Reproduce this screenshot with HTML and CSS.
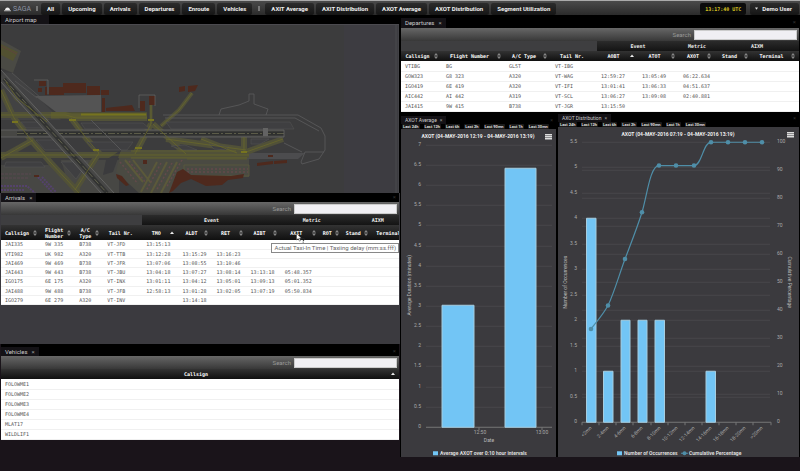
FILE: index.html
```html
<!DOCTYPE html>
<html lang="en">
<head>
<meta charset="utf-8">
<title>SAGA</title>
<link rel="stylesheet" href="styles.css">
</head>
<body>
<svg class="defs" aria-hidden="true">
  <symbol id="sort" viewBox="0 0 4 6"><path d="M0 2.400 2 0 4 2.400zM0 3.600 2 6 4 3.600z" fill="#888"/></symbol>
  <symbol id="up" viewBox="0 0 4 6"><path d="M0 4 2 1.600 4 4z" fill="#eee"/></symbol>
</svg>

<header class="topbar">
  <a class="logo" href="#"><svg viewBox="0 0 8 6" aria-hidden="true"><path d="M1 4.500Q1.500 1.200 4 1.200T7 4.500z" fill="#eee"/><path d="M0 5h8" stroke="#ccc"/></svg>SAGA</a>
  <span class="grip"></span>
  <nav class="nav">
    <button>All</button><button>Upcoming</button><button>Arrivals</button><button>Departures</button><button>Enroute</button><button>Vehicles</button>
    <span class="grip wide"></span>
    <button>AXIT Average</button><button>AXIT Distribution</button><button>AXOT Average</button><button>AXOT Distribution</button><button>Segment Utilization</button>
  </nav>
  <span class="clock">13:17:40 UTC</span>
  <button class="user"><svg viewBox="0 0 4 3" aria-hidden="true"><path d="M0 0h4L2 3z" fill="#ddd"/></svg>Demo User</button>
</header>

<main class="workspace">
  <div class="column left">
    <section class="panel">
      <div class="tabs fixed"><span class="tab map-tab">Airport map</span></div>
      <svg class="map" viewBox="0 24 400 169" preserveAspectRatio="xMinYMin slice" role="img" aria-label="Airport map">
        <rect y="24" width="400" height="169" fill="#3c3c3d"/>
        <path d="M343 24h57v169h-57z" fill="#3d3c41"/>
        <path d="M0 24.500H398V193M395 24V193" fill="none" stroke="#4b4a4f"/>
        <path d="M0 40 20 51 12 73 0 68z" fill="#4a4a44"/>
        <!-- paved ground -->
        <path d="M0 72 12 73 60 120H0z" fill="#424243"/>
        <path d="M34 96 100 95V112H55z" fill="#545454"/>
        <path d="M0 165H55L85 193H0zM60 160h58v33H70z" fill="#474744"/>
        <path d="M120 150H248V177H185L168 193H138L115 172z" fill="#4a4a42"/>
        <path d="M208 153h96l-7 6h-75z" fill="#4c4c4e"/>
        <!-- taxiway surfaces -->
        <g fill="none" stroke="#515138" stroke-width="6" stroke-linejoin="round">
          <path d="M0 115H65L75 118H146M0 155H248M0 90 13 118 30 140 50 163 78 193M0 158 32 140M70 118 85 138 98 153 74 190M5 82 16 98 46 122M150 124 134 154M152 124 185 154M165 139 245 150M282 139 245 152M243 137V153M200 139l36 14"/>
          <path d="M191 93 178 110 160 126" stroke-width="4"/>
          <path d="M150 104v20" stroke-width="3"/>
          <path d="M186 155h60" stroke-width="10"/>
        </g>
        <path d="M50 113.500H146v5H50z" fill="#5b5a31"/>
        <!-- grass between taxiways -->
        <g fill="#3f3f41" stroke="#575755" stroke-width=".5">
          <path d="M80 123h62l7 6H84zM86 142h46l-6 8H95zM20 122h27l6 6H25zM35 140h30l8 10H44zM5 162h35l4 5H3zM60 162h27l-12 17zM165 122h124l4 7H170zM170 146l14-1 12 5h-14zM208 144l20 3-3 3-12-1zM250 139h18l-9 5h-9z"/>
        </g>
        <path d="M105 160 120 150l-8 22-10 3z" fill="#3b3b3d"/>
        <!-- runways -->
        <path d="M0 133.500H283" stroke="#474744" stroke-width="7"/>
        <path d="M16 133.500H283" stroke="#2f302f" stroke-width="4"/>
        <path d="M16 133.500H283" stroke="#5c5c49" stroke-width="1" stroke-dasharray="7 2 2 2"/>
        <path d="M0 130H283V137H0" fill="none" stroke="#666" stroke-width=".8"/>
        <path d="M0 76 106 193" stroke="#474746" stroke-width="9"/>
        <path d="M3 79 106 193" stroke="#323332" stroke-width="4"/>
        <path d="M3 79 106 193" stroke="#62624e" stroke-width="1" stroke-dasharray="6 3"/>
        <g fill="none" stroke="#6b6b6b" stroke-width=".8">
          <path d="M0 70 113 193M0 82 100 193"/>
          <path d="M11 73 40 98M14 81 36 98" stroke="#555"/>
          <path d="M162 115H297L320 128 324 136V150L318 159 301 164 300 162 304 152H323M164 118H294L318 131M218 115l2-6 18-4 10-4v-7h5v10l14 5-2 6M283 143l18 9M90 120 120 150" stroke="#5c5c5d"/>
        </g>
        <path d="M262 128h5v8h-5z" fill="#636363"/>
        <!-- taxiway centrelines -->
        <g fill="none" stroke="#68672b" stroke-width=".8">
          <path d="M0 115H65L75 118H146M50 113H146M0 155H248M0 90 13 118 30 140 50 163 78 193M0 158 32 140M70 118 85 138 98 153 74 190M5 82 16 98 46 122M150 124 134 154M152 124 185 154M165 139 245 150M282 139 245 152M243 137V153M200 139l36 14M191 93 178 110 160 126M150 104v20M130 158h116M130 151h105"/>
        </g>
        <path d="M80 114.500H145M11 122h6M68 120h7M92 150h6M134 148h7M147 120h6M240 152h6" stroke="#77741f" stroke-width="2"/>
        <path d="M0 44 17 52 12 61 0 55z" fill="#525131"/><path d="M0 46 16 54" stroke="#5e453e"/>
        <!-- stands -->
        <g stroke="#5b593a" stroke-width="2"><path d="M124 160l18 22M132 160l18 23M156 162l-16 30M166 162l-16 31M176 162l-16 31"/></g>
        <g stroke="#634a4b" stroke-width="1.500" stroke-dasharray="2 2"><path d="M119 162l18 22M128 161l17 22M160 163l-15 28M171 163l-16 28M181 160l-16 28M186 169h61M186 172h61"/></g>
        <path d="M183 165h65v11h-65z" fill="none" stroke="#5a5a3d" stroke-width=".8"/>
        <path d="M0 186h26l8 7M0 190h24M37 177l15 16M41 177l14 15" fill="none" stroke="#54426c" stroke-width="2" stroke-dasharray="2 1"/>
        <path d="M0 174h30M0 178h28" stroke="#5a4850" stroke-dasharray="3 1"/>
        <!-- buildings -->
        <g fill="#4e291d">
          <path d="M38 81h7v5h-7zM37 88h4v4h-4zM44 87h2v8h-2zM48 87h15v8H48zM62 83h23v10H62zM86 86h13v9H86zM100 90h8v5h-8zM101 98h3v14h-3zM105 108l8-1 10-1 8-1 3 6h-29zM139 101h5v10h-5zM148 96h6v9h-6zM178 87l6-1v5l-6 1zM187 86l10-1-3 6-7 1zM142 160h4v4h-4zM33 175h5v2h-5zM115 174l6 2 7 9-3 1-9-8zM168 193l8-21 6-3 8 6 40 1 13-2-1 4-15 2-6 5-16 1-15-7-10 4-8 8zM267 155h5v2h-5zM256 163l16-2v3l-16 2zM273 161l13-1v3l-13 1z"/>
        </g>
        <path d="M33 80H47v14M138 108V95h16v11" fill="none" stroke="#6b6b6b" stroke-width=".6"/>
      </svg>
    </section>

    <section class="panel arrivals">
      <div class="tabs"><span class="tab">Arrivals <button class="close" aria-label="Close Arrivals">×</button></span></div>
      <div class="toolbar"><label for="s-arr">Search</label><input id="s-arr" type="search"></div>
      <div class="table-wrap">
      <table>
        <colgroup><col class="w40"><col class="w34"><col class="w28"><col class="w39"><col class="w36"><col class="w34"><col class="w34"><col class="w34"><col class="w39"><col class="w23"><col class="w29"><col class="w41"></colgroup>
        <thead>
          <tr class="groups"><td colspan="4"></td><th colspan="4">Event</th><th colspan="2">Metric</th><th colspan="2">AIXM</th></tr>
          <tr class="heads tall">
            <th><button><span>Callsign</span><svg><use href="#sort"/></svg></button></th>
            <th><button><span>Flight Number</span><svg><use href="#sort"/></svg></button></th>
            <th><button><span>A/C Type</span><svg><use href="#sort"/></svg></button></th>
            <th><button><span>Tail Nr.</span></button></th>
            <th><button><span>TMO</span><svg><use href="#up"/></svg></button></th>
            <th><button><span>ALDT</span><svg><use href="#sort"/></svg></button></th>
            <th><button><span>RET</span><svg><use href="#sort"/></svg></button></th>
            <th><button><span>AIBT</span><svg><use href="#sort"/></svg></button></th>
            <th><button><span>AXIT</span><svg><use href="#sort"/></svg></button></th>
            <th><button><span>ROT</span><svg><use href="#sort"/></svg></button></th>
            <th><button><span>Stand</span><svg><use href="#sort"/></svg></button></th>
            <th><button><span>Terminal</span><svg><use href="#sort"/></svg></button></th>
          </tr>
        </thead>
        <tbody>
          <tr><td>JAI335</td><td>9W 335</td><td>B738</td><td>VT-JFD</td><td>13:15:13</td><td></td><td></td><td></td><td></td><td></td><td></td><td></td></tr>
          <tr><td>VTI982</td><td>UK 982</td><td>A320</td><td>VT-TTB</td><td>13:12:28</td><td>13:15:29</td><td>13:16:23</td><td></td><td></td><td></td><td></td><td></td></tr>
          <tr><td>JAI469</td><td>9W 469</td><td>B738</td><td>VT-JFR</td><td>13:07:06</td><td>13:08:55</td><td>13:10:46</td><td></td><td></td><td></td><td></td><td></td></tr>
          <tr><td>JAI443</td><td>9W 443</td><td>B738</td><td>VT-JBU</td><td>13:04:18</td><td>13:07:27</td><td>13:08:14</td><td>13:13:18</td><td>05:48.357</td><td></td><td></td><td></td></tr>
          <tr><td>IGO175</td><td>6E 175</td><td>A320</td><td>VT-INX</td><td>13:01:11</td><td>13:04:12</td><td>13:05:01</td><td>13:09:13</td><td>05:01.352</td><td></td><td></td><td></td></tr>
          <tr><td>JAI488</td><td>9W 488</td><td>B738</td><td>VT-JFB</td><td>12:58:13</td><td>13:01:28</td><td>13:02:05</td><td>13:07:19</td><td>05:50.834</td><td></td><td></td><td></td></tr>
          <tr><td>IGO279</td><td>6E 279</td><td>A320</td><td>VT-INV</td><td></td><td>13:14:18</td><td></td><td></td><td></td><td></td><td></td><td></td></tr>
        </tbody>
      </table>
      </div>
      <div class="tooltip" role="tooltip">Actual Taxi-In Time | Taxiing delay (mm:ss.fff)</div>
      <svg class="cursor" viewBox="0 0 10 10" aria-hidden="true"><path d="M.500.500V7L2.200 5.500 3.500 8.200 4.600 7.600 3.500 5.200H5.500z" fill="#fff" stroke="#222" stroke-width=".4"/><path d="M6 6.500Q6 5.300 7.200 5.300T8.400 6.500Q8.400 7.200 7.200 7.600V8.200M7.200 8.800v.8" fill="none" stroke="#222" stroke-width="1"/></svg>
    </section>

    <section class="panel vehicles">
      <div class="tabs"><span class="tab">Vehicles <button class="close" aria-label="Close Vehicles">×</button></span></div>
      <div class="toolbar"><label for="s-veh">Search</label><input id="s-veh" type="search"></div>
      <table>
        <thead><tr class="heads"><th><button><span>Callsign</span><svg><use href="#up"/></svg></button></th></tr></thead>
        <tbody>
          <tr><td>FOLOWME1</td></tr><tr><td>FOLOWME2</td></tr><tr><td>FOLOWME3</td></tr><tr><td>FOLOWME4</td></tr><tr><td>MLAT17</td></tr><tr><td>WILDLIF1</td></tr>
        </tbody>
      </table>
    </section>
  </div>

  <div class="column right">
    <section class="panel departures">
      <div class="tabs"><span class="tab">Departures <button class="close" aria-label="Close Departures">×</button></span></div>
      <div class="toolbar"><label for="s-dep">Search</label><input id="s-dep" type="search"></div>
      <table>
        <colgroup><col class="w41"><col class="w63"><col class="w46"><col class="w46"><col class="w41"><col class="w41"><col class="w36"><col class="w37"><col class="w47"></colgroup>
        <thead>
          <tr class="groups"><td colspan="4"></td><th colspan="2">Event</th><th>Metric</th><th colspan="2">AIXM</th></tr>
          <tr class="heads">
            <th><button><span>Callsign</span><svg><use href="#sort"/></svg></button></th>
            <th><button><span>Flight Number</span><svg><use href="#sort"/></svg></button></th>
            <th><button><span>A/C Type</span><svg><use href="#sort"/></svg></button></th>
            <th><button><span>Tail Nr.</span></button></th>
            <th><button><span>AOBT</span><svg><use href="#up"/></svg></button></th>
            <th><button><span>ATOT</span><svg><use href="#sort"/></svg></button></th>
            <th><button><span>AXOT</span><svg><use href="#sort"/></svg></button></th>
            <th><button><span>Stand</span><svg><use href="#sort"/></svg></button></th>
            <th><button><span>Terminal</span><svg><use href="#sort"/></svg></button></th>
          </tr>
        </thead>
        <tbody>
          <tr><td>VTIBG</td><td>BG</td><td>GL5T</td><td>VT-IBG</td><td></td><td></td><td></td><td></td><td></td></tr>
          <tr><td>GOW323</td><td>G8 323</td><td>A320</td><td>VT-WAG</td><td>12:59:27</td><td>13:05:49</td><td>06:22.634</td><td></td><td></td></tr>
          <tr><td>IGO419</td><td>6E 419</td><td>A320</td><td>VT-IFI</td><td>13:01:41</td><td>13:06:33</td><td>04:51.637</td><td></td><td></td></tr>
          <tr><td>AIC442</td><td>AI 442</td><td>A319</td><td>VT-SCL</td><td>13:06:27</td><td>13:09:08</td><td>02:40.881</td><td></td><td></td></tr>
          <tr><td>JAI415</td><td>9W 415</td><td>B738</td><td>VT-JGR</td><td>13:15:50</td><td></td><td></td><td></td><td></td></tr>
        </tbody>
      </table>
    </section>

    <div class="charts">
      <section class="panel chart average">
        <div class="tabs"><span class="tab">AXOT Average <button class="close" aria-label="Close AXOT Average">×</button></span></div>
        <div class="ranges"><button>Last 24h</button><button>Last 12h</button><button>Last 6h</button><button>Last 2h</button><button>Last 90mn</button><button>Last 1h</button><button>Last 30mn</button></div>
        <svg class="plot" viewBox="401 129 155 328" role="img" aria-label="AXOT average">
          <text class="title" x="478" y="138">AXOT (04-MAY-2016 12:19 - 04-MAY-2016 13:19)</text>
          <path d="M545 134.500h7M545 136.500h7M545 138.500h7" stroke="#ddd" stroke-width="1.500"/>
          <path class="grid" d="M426 145H552M426 165H552M426 185H552M426 205H552M426 225H552M426 246H552M426 266H552M426 286H552M426 306H552M426 326H552M426 346H552M426 366H552M426 387H552M426 407H552"/>
          <path class="axis" d="M426 427H552M479 427v3M542 427v3"/>
          <g class="bars"><path d="M442 305h32v122h-32zM505 168h31v259h-31z"/></g>
          <g class="ticks end">
            <text x="421" y="146">7</text><text x="421" y="166">6.5</text><text x="421" y="186">6</text><text x="421" y="206">5.5</text><text x="421" y="226">5</text><text x="421" y="247">4.5</text><text x="421" y="267">4</text><text x="421" y="287">3.5</text><text x="421" y="307">3</text><text x="421" y="327">2.5</text><text x="421" y="347">2</text><text x="421" y="367">1.5</text><text x="421" y="388">1</text><text x="421" y="408">0.5</text><text x="421" y="428">0</text>
          </g>
          <g class="ticks mid"><text x="480" y="434">12:50</text><text x="542" y="434">13:00</text></g>
          <text class="name" x="489" y="442">Date</text>
          <text class="name" transform="translate(411 285) rotate(-90)">Average Duration (minutes)</text>
          <path d="M433 451h5v4h-5z" fill="#72c5f5"/>
          <text class="legend" x="440" y="455">Average AXOT over 0:10 hour intervals</text>
        </svg>
      </section>

      <section class="panel chart distribution">
        <div class="tabs"><span class="tab">AXOT Distribution <button class="close" aria-label="Close AXOT Distribution">×</button></span></div>
        <div class="ranges"><button>Last 24h</button><button>Last 12h</button><button>Last 6h</button><button>Last 2h</button><button>Last 90mn</button><button>Last 1h</button><button>Last 30mn</button></div>
        <svg class="plot" viewBox="558 127 241 330" role="img" aria-label="AXOT distribution">
          <text class="title" x="678" y="136">AXOT (04-MAY-2016 07:19 - 04-MAY-2016 13:19)</text>
          <path d="M787 132.500h7M787 134.500h7M787 136.500h7" stroke="#ddd" stroke-width="1.500"/>
          <path class="grid" d="M582 142H770M582 167H770M582 193H770M582 218H770M582 244H770M582 269H770M582 295H770M582 320H770M582 346H770M582 371H770M582 397H770M582 170H770M582 198H770M582 226H770M582 254H770M582 282H770M582 310H770M582 338H770M582 366H770M582 394H770"/>
          <path class="axis" d="M582 422H771M582 422v3M599 422v3M616 422v3M633 422v3M651 422v3M668 422v3M685 422v3M702 422v3M719 422v3M736 422v3M753 422v3M771 422v3"/>
          <g class="bars"><path d="M586.500 218h9.500v204h-9.500zM603.500 371h9.500v51h-9.500zM621 320h9v102h-9zM638 320h9v102h-9zM655 320h9.500v102h-9.500zM706 371h9.500v51h-9.500z"/></g>
          <path d="M591 328.700C596 322 602 316 608 305.300C614 293 619 275 625 258.800C631 243 637 228 642 212C647 196 650 165.300 659 165.300H694C702 165.300 703 142 711 142H762" fill="none" stroke="#4f8ea8" stroke-width="1.200"/>
          <g fill="#4f8ea8"><circle cx="591" cy="328.700" r="2.300"/><circle cx="608" cy="305.300" r="2.300"/><circle cx="625" cy="258.800" r="2.300"/><circle cx="642" cy="212" r="2.300"/><circle cx="659" cy="165.300" r="2.300"/><circle cx="676" cy="165.300" r="2.300"/><circle cx="694" cy="165.300" r="2.300"/><circle cx="711" cy="142" r="2.300"/><circle cx="728" cy="142" r="2.300"/><circle cx="745" cy="142" r="2.300"/><circle cx="762" cy="142" r="2.300"/></g>
          <g class="ticks end">
            <text x="577" y="143">5.5</text><text x="577" y="168">5</text><text x="577" y="194">4.5</text><text x="577" y="219">4</text><text x="577" y="245">3.5</text><text x="577" y="270">3</text><text x="577" y="296">2.5</text><text x="577" y="321">2</text><text x="577" y="347">1.5</text><text x="577" y="372">1</text><text x="577" y="398">0.5</text><text x="577" y="423">0</text>
          </g>
          <g class="ticks">
            <text x="777" y="143">100</text><text x="777" y="171">90</text><text x="777" y="199">80</text><text x="777" y="227">70</text><text x="777" y="255">60</text><text x="777" y="283">50</text><text x="777" y="311">40</text><text x="777" y="339">30</text><text x="777" y="367">20</text><text x="777" y="395">10</text><text x="777" y="423">0</text>
          </g>
          <g class="ticks end">
            <text transform="translate(592 428) rotate(-45)">&lt;2mn</text><text transform="translate(609 428) rotate(-45)">2-4mn</text><text transform="translate(626 428) rotate(-45)">4-6mn</text><text transform="translate(643 428) rotate(-45)">6-8mn</text><text transform="translate(661 428) rotate(-45)">8-10mn</text><text transform="translate(678 428) rotate(-45)">10-12mn</text><text transform="translate(695 428) rotate(-45)">12-14mn</text><text transform="translate(712 428) rotate(-45)">14-16mn</text><text transform="translate(729 428) rotate(-45)">16-18mn</text><text transform="translate(746 428) rotate(-45)">18-20mn</text><text transform="translate(763 428) rotate(-45)">&gt;20mn</text>
          </g>
          <text class="name" transform="translate(567 282) rotate(-90)">Number of Occurrences</text>
          <text class="name" transform="translate(788 282) rotate(90)">Cumulative Percentage</text>
          <path d="M617 451h5v4h-5z" fill="#72c5f5"/><text class="legend" x="624" y="455">Number of Occurrences</text>
          <path d="M681 453h7" stroke="#4f8ea8"/><circle cx="684.500" cy="453" r="2" fill="#4f8ea8"/><text class="legend" x="689" y="455">Cumulative Percentage</text>
        </svg>
      </section>
    </div>
  </div>
</main>
</body>
</html>
```
FILE: styles.css
```css
* { box-sizing: border-box; }
body {
  margin: 0;
  min-height: 100vh;
  display: flex;
  flex-direction: column;
  background: #000;
  color: #ddd;
  font: 6px/8px Roboto, "Liberation Sans", sans-serif;
}
button, input { margin: 0; padding: 0; border: 0; background: none; color: inherit; font: inherit; }
.defs { position: absolute; width: 0; height: 0; }

.topbar {
  height: 15px;
  display: flex;
  align-items: center;
  padding: 1px 1px 0 4px;
  border-top: 1px solid #aaa;
  background: linear-gradient(#4a4a4a, #2b2b2b);
}
.logo { display: flex; align-items: center; gap: 2px; width: 32px; color: #8d94a5; font-size: 7px; text-decoration: none; }
.logo svg { width: 7px; height: 6px; }
.grip { width: 2px; height: 5px; margin-right: 3px; background: #777; }
.grip.wide { margin: 0 3px 0 4px; align-self: center; }
.nav { display: flex; gap: 2px; flex: 1; }
.nav button, .user, .clock {
  height: 12px;
  padding: 0 6px;
  border-radius: 2px;
  background: linear-gradient(#2c2c2c, #151515);
  color: #eee;
  font-weight: 700;
  white-space: nowrap;
}
.clock { padding: 2px 5px; margin-right: 4px; background: #0c0c0c; color: #d8c321; font: 700 5px/8px "DejaVu Sans Mono", monospace; }
.user { display: flex; align-items: center; gap: 4px; padding: 0 7px 0 5px; }
.user svg { width: 3px; height: 3px; }

.workspace { flex: 1; display: grid; grid-template-columns: 1fr 1fr; }
.column { display: grid; min-width: 0; }
.left { grid-template-rows: 178fr 151fr 127fr; }
.right { grid-template-rows: auto 1fr 14px; background: linear-gradient(#000, #000) top / 100% calc(100% - 14px) no-repeat, #1a141a; }
.panel { display: flex; flex-direction: column; min-width: 0; min-height: 0; padding: 0 1px; position: relative; }
.tabs { display: flex; height: 9px; flex: none; background: #000; }
.tab { display: flex; align-items: center; gap: 4px; padding: 0 4px; background: #141216; color: #ccc; white-space: nowrap; }
.tabs:not(.fixed)::after { content: "×"; margin-left: auto; padding-right: 3px; color: #333; }
.map-tab { padding-right: 12px; }
.close { color: #999; line-height: 8px; }
.map { flex: 1; min-height: 0; width: 100%; }

.toolbar {
  display: flex;
  flex: none;
  height: 13px;
  align-items: center;
  justify-content: flex-end;
  gap: 3px;
  padding-right: 2px;
  background: linear-gradient(#676767, #383838);
  color: #999;
}
.toolbar input { width: 26%; height: 10px; padding: 0 2px; border: 1px solid #ccc; background: #f0eff3; color: #333; }

.table-wrap { overflow: hidden; }
table { width: 100%; table-layout: fixed; border-collapse: collapse; font: 5px/6px "DejaVu Sans Mono", monospace; }
.table-wrap table { width: calc(100% + 14px); height: 90px; }
th, td { padding: 0; }
.groups { height: 10px; background: linear-gradient(#2b2b2b, #141414); color: #eee; }
.groups td { background: #3e3e40; }
.heads { height: 10px; background: linear-gradient(#333, #101010); color: #fff; }
.heads.tall { height: 15px; }
.heads button { display: flex; align-items: center; width: 100%; padding-right: 4px; font-weight: 700; }
.heads span { flex: 1; }
.heads svg { width: 4px; height: 6px; flex: none; }
tbody { background: #fff; color: #555; }
tbody tr { height: 10px; }
.arrivals tbody tr { height: 9px; }
tbody td { padding-left: 4px; border-bottom: 1px solid #f0f0f0; white-space: nowrap; }
.w23 { width: 23px; } .w28 { width: 28px; } .w29 { width: 29px; } .w34 { width: 34px; }
.w36 { width: 36px; } .w37 { width: 37px; } .w39 { width: 39px; } .w40 { width: 40px; }
.w41 { width: 41px; } .w46 { width: 46px; } .w47 { width: 47px; } .w63 { width: 63px; }

.arrivals { background: #3b3a3f; }
.vehicles { background: #1a141a; }
.vehicles .tabs { height: 12px; padding-top: 3px; }
.departures .tabs { height: 13px; padding-top: 3px; }
.tooltip {
  position: absolute;
  top: 50px;
  right: 1px;
  padding: 0 2px;
  border: 1px solid #888;
  background: #fff;
  color: #666;
  white-space: nowrap;
}
.cursor { position: absolute; top: 40px; left: 74%; width: 10px; height: 10px; }

.charts { display: grid; grid-template-columns: 157fr 243fr; min-height: 0; }
.chart .tabs { font-size: 5px; height: 8px; }
.average { padding-top: 4px; }
.distribution { padding-top: 2px; }
.chart .tab { gap: 3px; }
.ranges { display: flex; flex: none; gap: 4px; height: 5px; padding: 0 1px; }
.ranges button { padding: 0 1px; border-radius: 1px; background: #1b1b1b; color: #ddd; font: 700 4px/5px Roboto, sans-serif; white-space: nowrap; }
.plot { flex: 1; min-height: 0; width: 100%; background: #3b3a3e; }
.plot text { font-family: Roboto, sans-serif; }
.title { fill: #eee; font-size: 5px; font-weight: 700; text-anchor: middle; }
.grid { stroke: #48474b; stroke-width: 1; }
.axis { stroke: #777; stroke-width: 1; fill: none; }
.bars { fill: #72c5f5; stroke: #a5cde0; stroke-width: 1; }
.ticks { fill: #aaa; font-size: 5px; }
.end { text-anchor: end; }
.mid { text-anchor: middle; }
.name { fill: #bbb; font-size: 5px; text-anchor: middle; }
.legend { fill: #ddd; font-size: 5px; font-weight: 700; }
```
